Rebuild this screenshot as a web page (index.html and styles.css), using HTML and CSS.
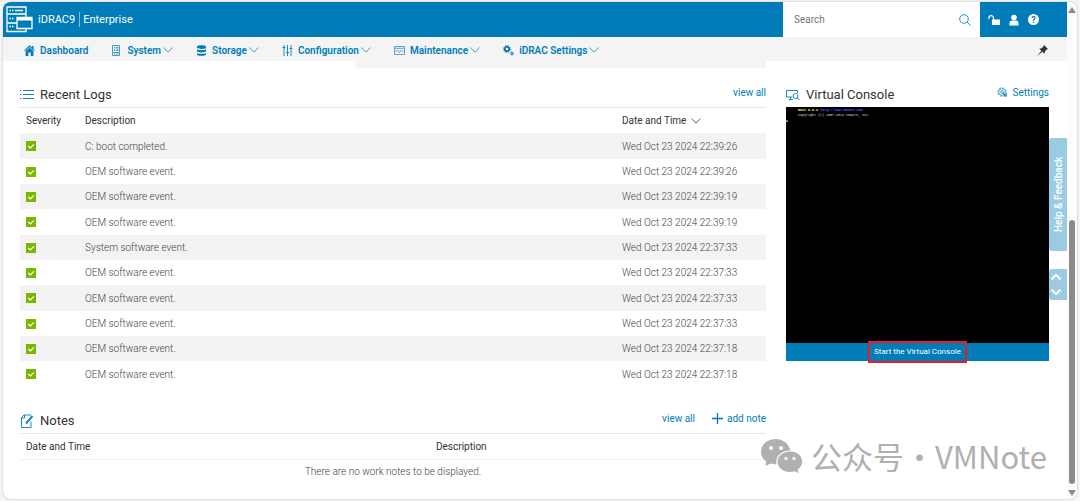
FILE: index.html
```html
<!DOCTYPE html>
<html lang="en">
<head>
    <meta charset="UTF-8">
    <meta name="viewport" content="width=device-width, initial-scale=1.0">
    <title>iDRAC9 - Dashboard</title>
    <link rel="stylesheet" href="styles.css">
</head>
<body>
    <!-- shared icons -->
    <svg class="defs" width="0" height="0" aria-hidden="true">
        <symbol id="chevron" viewBox="0 0 10 6"><path d="M.5.5 5 5.2 9.5.5" fill="none" stroke="currentColor"/></symbol>
        <symbol id="check" viewBox="0 0 10 10"><rect width="10" height="10" fill="#7ab800"/><path d="M2.3 5 4.3 7 8 3.4" fill="none" stroke="#fff" stroke-width="1.2"/></symbol>
    </svg>

    <div class="window">
        <div class="page">
            <header class="topbar">
                <div class="brand">
                    <svg class="logo" viewBox="0 0 27 28" fill="none" stroke="#fff" stroke-width="1.3">
                        <path d="M1 1h19v7H1zM1 8v17.500h19V22M1 17h10M20 8v3M3.500 4.500h1.500M6 4.500h1.500M9 4.500h8M3.500 12.500h1.500M6 12.500h1.500M3.500 20.500h1.500M6 20.500h1.500"/>
                        <path d="M11 11.500h15v11H11z" fill="#007db8"/>
                        <path d="M11 13h15" stroke-width="3"/>
                    </svg>
                    <span class="product">iDRAC9</span>
                    <span class="edition">Enterprise</span>
                </div>
                <form class="search">
                    <input type="text" placeholder="Search" aria-label="Search">
                    <button type="submit" aria-label="Search">
                        <svg width="12" height="12" viewBox="0 0 12 12" fill="none" stroke="#1e93d0"><circle cx="5" cy="5" r="4.300"/><path d="M8 8l3.500 3.500"/></svg>
                    </button>
                </form>
                <div class="actions">
                    <button aria-label="Lockdown">
                        <svg width="12" height="12" viewBox="0 0 12 12"><path d="M4 5.500h8V11H4z" fill="#fff"/><path d="M5.500 6V4a2.300 2.300 0 0 0-4.600 0v1" fill="none" stroke="#fff" stroke-width="1.200"/></svg>
                    </button>
                    <button aria-label="User">
                        <svg width="10" height="12" viewBox="0 0 10 12" fill="#fff"><circle cx="5" cy="3.500" r="2.800"/><path d="M.5 11.500V9q0-2.500 2.500-2.500h4q2.500 0 2.500 2.500v2.500z"/></svg>
                    </button>
                    <button class="help" aria-label="Help">?</button>
                </div>
            </header>

            <nav class="menu">
                <a href="#">
                    <svg width="11" height="11" viewBox="0 0 11 11" fill="#007db8"><path d="M5.500.3 8 2.500V1h1.500v3l1.300 1.200-.6.700L5.500 1.900.8 5.900l-.6-.700z"/><path d="M1.600 6 5.500 2.700 9.400 6v5H6.700V7.500H4.300V11H1.600z"/></svg>
                    Dashboard
                </a>
                <a href="#">
                    <svg width="11" height="11" viewBox="0 0 11 11" fill="none" stroke="#4b9fcb"><path d="M1.500.5h7v10h-7zM1.500 7.500h7M3 2.500h1M5 2.500h2.500M3 4h1M5 4h2.500M3 5.500h1M5 5.500h2.500M3 9h1M5 9h2.500"/></svg>
                    System <svg class="chevron"><use href="#chevron"/></svg>
                </a>
                <a href="#">
                    <svg width="11" height="11" viewBox="0 0 11 11" fill="#007db8"><path d="M1 1.700C1-.2 10-.2 10 1.700v1C10 4.300 1 4.300 1 2.700zM1 4.300c1.500 1.200 7.500 1.200 9 0v2c0 1.500-9 1.500-9 0zM1 7.900c1.500 1.200 7.500 1.200 9 0v1.500c0 1.800-9 1.800-9 0z"/></svg>
                    Storage <svg class="chevron"><use href="#chevron"/></svg>
                </a>
                <a href="#">
                    <svg width="11" height="11" viewBox="0 0 11 11" fill="none" stroke="#1a86bd"><path d="M2 0v11M5.500 0v11M9 0v11M.5 2.500h3M4 7.500h3M7.500 3.500h3"/></svg>
                    Configuration <svg class="chevron"><use href="#chevron"/></svg>
                </a>
                <a href="#">
                    <svg width="11" height="11" viewBox="0 0 11 11" fill="none" stroke="#3291c3" stroke-width=".8"><path d="M.5 1.500h10v8H.5zM.5 3.300h10M1.500 7 3.500 5l2 2.500L7.500 5l2 2"/></svg>
                    Maintenance <svg class="chevron"><use href="#chevron"/></svg>
                </a>
                <a href="#">
                    <svg width="11" height="11" viewBox="0 0 11 11" fill="none" stroke="#007db8"><circle cx="4" cy="4" r="2.200" stroke-width="1.800"/><circle cx="4" cy="4" r="3.400" stroke-dasharray="1.500 1.170"/><circle cx="9" cy="8.500" r="1.100"/><circle cx="9" cy="8.500" r="1.700" stroke-width=".6" stroke-dasharray=".7 .6"/></svg>
                    iDRAC Settings <svg class="chevron"><use href="#chevron"/></svg>
                </a>
                <button class="pin" aria-label="Pin menu">
                    <svg width="11" height="11" viewBox="0 0 11 11" fill="#333"><path d="M7 0 11 4 9.800 4.600 8 6.300 7.500 8.800 5.300 6.800.2 11 4.300 5.800 2.300 3.700 4.700 3.200 6.500 1.300z"/></svg>
                </button>
            </nav>

            <main class="content">
                <div class="left">
                    <div class="strip"></div>

                    <section class="logs">
                        <div class="section-head">
                            <svg width="14" height="12" viewBox="0 0 14 12" fill="none" stroke="#1a86bd"><path d="M0 1.500h1.500M3 1.500h11M0 5.500h1.500M3 5.500h11M0 9.500h1.500M3 9.500h11"/></svg>
                            <h2>Recent Logs</h2>
                            <a href="#">view all</a>
                        </div>
                        <table class="log-table">
                            <thead>
                                <tr><th class="severity">Severity</th><th>Description</th><th class="date">Date and Time <svg class="chevron"><use href="#chevron"/></svg></th></tr>
                            </thead>
                            <tbody>
                                <tr><td><svg class="ok"><use href="#check"/></svg></td><td>C: boot completed.</td><td>Wed Oct 23 2024 22:39:26</td></tr>
                                <tr><td><svg class="ok"><use href="#check"/></svg></td><td>OEM software event.</td><td>Wed Oct 23 2024 22:39:26</td></tr>
                                <tr><td><svg class="ok"><use href="#check"/></svg></td><td>OEM software event.</td><td>Wed Oct 23 2024 22:39:19</td></tr>
                                <tr><td><svg class="ok"><use href="#check"/></svg></td><td>OEM software event.</td><td>Wed Oct 23 2024 22:39:19</td></tr>
                                <tr><td><svg class="ok"><use href="#check"/></svg></td><td>System software event.</td><td>Wed Oct 23 2024 22:37:33</td></tr>
                                <tr><td><svg class="ok"><use href="#check"/></svg></td><td>OEM software event.</td><td>Wed Oct 23 2024 22:37:33</td></tr>
                                <tr><td><svg class="ok"><use href="#check"/></svg></td><td>OEM software event.</td><td>Wed Oct 23 2024 22:37:33</td></tr>
                                <tr><td><svg class="ok"><use href="#check"/></svg></td><td>OEM software event.</td><td>Wed Oct 23 2024 22:37:33</td></tr>
                                <tr><td><svg class="ok"><use href="#check"/></svg></td><td>OEM software event.</td><td>Wed Oct 23 2024 22:37:18</td></tr>
                                <tr><td><svg class="ok"><use href="#check"/></svg></td><td>OEM software event.</td><td>Wed Oct 23 2024 22:37:18</td></tr>
                            </tbody>
                        </table>
                    </section>

                    <section class="notes">
                        <div class="section-head">
                            <svg width="14" height="14" viewBox="0 0 14 14" fill="none" stroke="#1a86bd"><path d="M11 7.500v6H1.500V3.500L4 1h7M1.500 4H4.500V1"/><path d="M6 9.500l6.500-7.500" stroke-width="2"/></svg>
                            <h2>Notes</h2>
                            <a href="#">view all</a>
                            <a href="#" class="add"><svg width="11" height="11" viewBox="0 0 11 11" stroke="#007db8"><path d="M5.500 0v11M0 5.500h11" stroke-width="1.300"/></svg>add note</a>
                        </div>
                        <table class="note-table">
                            <thead>
                                <tr><th>Date and Time</th><th>Description</th></tr>
                            </thead>
                            <tbody>
                                <tr><td colspan="2">There are no work notes to be displayed.</td></tr>
                            </tbody>
                        </table>
                    </section>
                </div>

                <section class="console">
                    <div class="section-head">
                        <svg width="14" height="12" viewBox="0 0 14 12" fill="none" stroke="#1a86bd"><path d="M6 8H.5V1.500h11V4M3 10.500h4M4.500 8v2.500"/><circle cx="9.500" cy="7" r="2.500"/><path d="M11.300 8.800l2.200 2.200"/></svg>
                        <h2>Virtual Console</h2>
                        <a href="#"><svg width="11" height="11" viewBox="0 0 11 11" fill="none" stroke="#1a86bd" stroke-width=".8"><circle cx="5" cy="5" r="3.400"/><circle cx="5" cy="5" r="4.300" stroke-dasharray="1.600 1.780"/><circle cx="5" cy="5" r="1.300"/><path d="M6 6l3.500 3.500M10 7l-2.500 2.500" stroke-width="1.200"/></svg>Settings</a>
                    </div>
                    <svg class="screen" viewBox="0 0 1024 919">
                        <rect width="1024" height="919" fill="#000"/>
                        <text x="47" y="16" fill="#ffff55" font-weight="bold">ESXi 8.0.3</text>
                        <text x="135" y="16" fill="#5555ff" font-weight="bold">http://www.vmware.com</text>
                        <text x="47" y="35" fill="#ddd">Copyright (c) 2007-2024 VMware, Inc.</text>
                        <path d="M0 55h8" stroke="#ccc" stroke-width="4"/>
                    </svg>
                    <button class="start"><span>Start the Virtual Console</span></button>
                </section>
            </main>

            <button class="feedback">Help &amp; Feedback</button>
            <div class="jump">
                <button class="up" aria-label="Scroll up"><svg class="chevron"><use href="#chevron"/></svg></button>
                <button aria-label="Scroll down"><svg class="chevron"><use href="#chevron"/></svg></button>
            </div>
        </div>

        <div class="scrollbar">
            <svg width="8" height="6" viewBox="0 0 8 6"><path d="M4 0l4 6H0z"/></svg>
            <div class="track"><div class="thumb"></div></div>
            <svg width="8" height="6" viewBox="0 0 8 6"><path d="M4 6L0 0h8z"/></svg>
        </div>
    </div>

    <div class="watermark">
        <svg width="42" height="34" viewBox="0 0 42 34" fill="#b0b0b0">
            <path d="M15 0C6.500 0 0 5.500 0 12.700c0 4 2 7.400 5.300 9.800L4.500 27l5-2.500q2.600.9 6 .8C14 17 21 11.300 29.500 11.500 28 5 22 0 15 0z"/>
            <path d="M29 12.500c-7 0-12.500 4.500-12.500 10.300S22 33 29 33q2.500 0 4.500-.7L37.500 34l-1-3.500c3-2 4.800-4.700 4.800-7.700 0-5.800-5.300-10.300-12.300-10.300z"/>
            <g fill="#fff"><circle cx="10" cy="9" r="2"/><circle cx="20" cy="9" r="2"/><circle cx="25" cy="19.500" r="1.600"/><circle cx="33" cy="19.500" r="1.600"/></g>
        </svg>
        <span>公众号·</span>
        <span>VMNote</span>
    </div>
</body>
</html>
```
FILE: styles.css
```css
* {
    box-sizing: border-box;
}
body {
    margin: 0;
    height: 100vh;
    padding: 2px 3px;
    font-family: Roboto, Arial, sans-serif;
    font-size: 10px;
    color: #333;
    background-color: #f5f5f5;
    overflow: hidden;
}
button {
    padding: 0;
    border: none;
    background: none;
    font: inherit;
    cursor: pointer;
}
a {
    color: #007db8;
    text-decoration: none;
}
h2 {
    margin: 0;
    font-size: 13px;
    font-weight: 400;
}
svg {
    flex: none;
}
.defs {
    position: absolute;
}
.chevron {
    width: 10px;
    height: 6px;
}
.window {
    display: flex;
    height: 100%;
    background-color: white;
    border-radius: 8px;
    box-shadow: 0 0 2px rgba(0, 0, 0, 0.3);
    overflow: hidden;
}
.page {
    position: relative;
    flex: 1;
}

/* header */
.topbar {
    display: flex;
    height: 35px;
    background-color: #007db8;
    color: white;
}
.brand {
    flex: 1;
    display: flex;
    align-items: center;
    padding-left: 3px;
    font-size: 11px;
}
.logo {
    width: 27px;
    height: 28px;
}
.product {
    padding: 1px 4px 1px 5px;
    border-right: 1px solid #80bedb;
}
.edition {
    padding-left: 3px;
}
.search {
    display: flex;
    align-items: center;
    width: 197px;
    padding: 0 9px 0 11px;
    background-color: white;
}
.search input {
    flex: 1;
    min-width: 0;
    padding: 0;
    border: none;
    outline: none;
    font: inherit;
}
.search input::placeholder {
    color: #757575;
}
.search button {
    display: flex;
}
.actions {
    display: flex;
    align-items: center;
    gap: 9px;
    width: 87px;
    padding-left: 8px;
}
.actions button {
    display: flex;
}
.actions .help {
    justify-content: center;
    align-items: center;
    width: 11px;
    height: 11px;
    border-radius: 50%;
    background-color: white;
    color: #007db8;
    font-size: 9px;
    font-weight: 700;
}

/* menu */
.menu {
    display: flex;
    align-items: center;
    gap: 23px;
    height: 24px;
    padding: 2px 19px 0 21px;
    background-color: #f4f4f4;
}
.menu a {
    display: flex;
    align-items: center;
    font-weight: 600;
}
.menu a svg:first-child {
    margin-right: 5px;
}
.menu .chevron {
    margin-left: 2px;
    color: #4b9fcb;
}
.pin {
    display: flex;
    margin-left: auto;
}

/* dashboard */
.content {
    display: flex;
    gap: 20px;
    padding: 0 18px 0 17px;
}
.left {
    flex: 1;
}
.strip {
    width: 55%;
    height: 7px;
    margin-left: auto;
    background-color: #f4f4f4;
}
.section-head {
    display: flex;
    align-items: center;
    height: 26px;
    gap: 6px;
    border-bottom: 1px solid #e6e6e6;
}
.section-head h2 {
    margin-right: auto;
}
.section-head a {
    display: flex;
    align-items: center;
    gap: 4px;
    padding-bottom: 4px;
}
.logs {
    padding-top: 14px;
}
table {
    width: 100%;
    border-collapse: collapse;
    table-layout: fixed;
}
th {
    height: 25px;
    padding: 0;
    font-weight: 400;
    text-align: left;
}
th .chevron {
    margin-left: 2px;
    color: #666;
}
td {
    height: 25px;
    padding: 0;
    font-weight: 300;
    color: #444;
}
.log-table tbody tr:nth-child(odd) {
    background-color: #f3f3f3;
}
.log-table tbody tr:nth-child(3n+1) td {
    height: 26px;
}
.log-table th:first-child,
.log-table td:first-child,
.note-table th:first-child {
    padding-left: 6px;
}
.severity {
    width: 65px;
}
.date {
    width: 144px;
}
.ok {
    display: block;
    width: 10px;
    height: 10px;
}
.notes {
    padding-top: 21px;
}
.notes .section-head .add {
    margin-left: 11px;
}
.note-table thead tr {
    border-bottom: 1px solid #f3f3f3;
}
.note-table th:first-child {
    width: 416px;
}
.note-table td {
    text-align: center;
}

/* console */
.console {
    width: 263px;
    padding-top: 21px;
}
.console .section-head {
    border-bottom: none;
    height: 25px;
}
.screen {
    display: block;
    width: 100%;
    font-family: "Liberation Mono", monospace;
    font-size: 13px;
}
.start {
    display: flex;
    justify-content: center;
    width: 100%;
    height: 18px;
    background-color: #007db8;
    color: white;
    font-size: 8px;
}
.start span {
    padding: 0 4px;
    line-height: 18px;
    outline: 2px solid #ed1c24;
}

/* side tabs over the page edge */
.feedback,
.jump {
    position: absolute;
    right: 0;
    width: 18px;
    background-color: #9acbe3;
    border-radius: 3px 0 0 3px;
    color: white;
}
.feedback {
    top: 136px;
    height: 113px;
    font-weight: 500;
    writing-mode: vertical-rl;
    rotate: 180deg;
    border-radius: 0 3px 3px 0;
}
.jump {
    top: 267px;
    height: 31px;
    display: flex;
    flex-direction: column;
    justify-content: space-around;
    padding-left: 2px;
}
.jump button {
    display: flex;
    color: white;
}
.jump svg {
    stroke-width: 2;
}
.jump .up svg {
    rotate: 180deg;
}

.scrollbar {
    display: flex;
    flex-direction: column;
    align-items: center;
    width: 10px;
    padding: 5px 0 3px;
    background-color: #fcfcfc;
    fill: #8b8b8b;
}
.track {
    flex: 1;
    display: flex;
    align-items: flex-end;
    padding-bottom: 6px;
}
.thumb {
    width: 6px;
    height: 56%;
    border-radius: 3px;
    background-color: #8b8b8b;
}

.watermark {
    position: absolute;
    right: 33px;
    bottom: 23px;
    display: flex;
    align-items: center;
    font-family: "Noto Sans CJK SC", sans-serif;
    font-size: 31px;
    line-height: 44px;
    color: #b0b0b0;
}
.watermark svg {
    margin-right: 8px;
}
```
